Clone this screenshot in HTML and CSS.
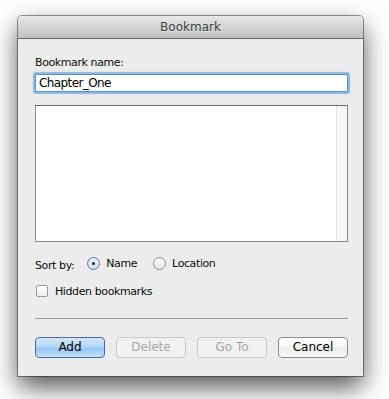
FILE: index.html
```html
<!DOCTYPE html>
<html lang="en">
<head>
    <meta charset="UTF-8">
    <title>Bookmark</title>
    <link rel="stylesheet" href="styles.css">
</head>
<body>
    <div class="window">
        <div class="titlebar">Bookmark</div>
        <div class="content">
            <div class="field-label">Bookmark name:</div>
            <div class="name-input">Chapter_One</div>
            <div class="bookmark-list">
                <div class="scroll-track"></div>
            </div>
            <div class="sort-row">
                <span class="sort-label">Sort by:</span>
                <span class="radio radio--checked"></span>
                <span class="option-text">Name</span>
                <span class="radio radio--gap"></span>
                <span class="option-text">Location</span>
            </div>
            <div class="check-row">
                <span class="checkbox"></span>
                <span class="option-text">Hidden bookmarks</span>
            </div>
            <div class="separator"></div>
            <div class="buttons">
                <div class="button button--default">Add</div>
                <div class="button button--disabled">Delete</div>
                <div class="button button--disabled">Go To</div>
                <div class="button">Cancel</div>
            </div>
        </div>
    </div>
</body>
</html>
```

FILE: styles.css
```css
html, body {
    height: 100%;
}
body {
    margin: 0;
    min-height: 399px;
    overflow: hidden;
    background-color: #ffffff;
    font-family: "DejaVu Sans", Verdana, sans-serif;
    color: #0d0d0d;
}
.window {
    width: 345px;
    margin: 16px 0 0 18px;
    background-color: #ececec;
    border-radius: 4px 4px 0 0;
    box-shadow: 0 0 0 1px rgba(0, 0, 0, 0.4), 0 11px 26px rgba(0, 0, 0, 0.68);
}
.titlebar {
    height: 22px;
    line-height: 23px;
    text-align: center;
    font-size: 12px;
    color: #3c3c3c;
    background: linear-gradient(#e9e9e9, #d0d0d0 60%, #c2c2c2);
    border-bottom: 1px solid #666;
    border-radius: 4px 4px 0 0;
    text-shadow: 0 1px 0 rgba(255, 255, 255, 0.5);
}
.content {
    padding: 17px 15px 18px 17px;
    display: flex;
    flex-direction: column;
}
.field-label {
    font-size: 11px;
    line-height: 13px;
    letter-spacing: -0.4px;
}
.name-input {
    margin-top: 5px;
    height: 16px;
    line-height: 16px;
    padding: 0 3px;
    background-color: #ffffff;
    border: 1px solid #5c8fc6;
    box-shadow: 0 0 1px 2px #8eb8e0;
    border-radius: 1px;
    font-size: 12px;
    letter-spacing: -0.6px;
    color: #000;
}
.bookmark-list {
    margin-top: 13px;
    height: 135px;
    background-color: #ffffff;
    border: 1px solid #8a8a8a;
    border-top-color: #6a6a6a;
    display: flex;
    justify-content: flex-end;
}
.scroll-track {
    width: 10px;
    background-color: #f6f6f6;
    border-left: 1px solid #e4e4e4;
}
.sort-row {
    margin-top: 13px;
    height: 16px;
    display: flex;
    align-items: center;
    font-size: 11px;
    letter-spacing: -0.4px;
}
.sort-label {
    margin-top: 4px;
    margin-right: 13px;
}
.option-text {
    margin-left: 6px;
}
.radio {
    width: 11px;
    height: 11px;
    border-radius: 50%;
    border: 1px solid #8d8d8d;
    background: linear-gradient(#ffffff, #e6e6e6);
    position: relative;
}
.radio--gap {
    margin-left: 16px;
}
.radio--checked {
    border-color: #5e77a3;
    background: linear-gradient(#eef4fb, #cfdff0);
}
.radio--checked::after {
    content: "";
    position: absolute;
    left: 4px;
    top: 4px;
    width: 3px;
    height: 3px;
    border-radius: 50%;
    background-color: #1d2a3c;
}
.check-row {
    margin-top: 12px;
    height: 16px;
    display: flex;
    align-items: center;
    font-size: 11px;
    letter-spacing: -0.4px;
    padding-left: 1px;
}
.checkbox {
    width: 10px;
    height: 10px;
    border: 1px solid #9a9a9a;
    border-radius: 2px;
    background: linear-gradient(#ffffff, #ececec);
}
.check-row .option-text {
    margin-left: 7px;
}
.separator {
    margin-top: 19px;
    height: 1px;
    background-color: #9c9c9c;
}
.buttons {
    margin-top: 18px;
    display: flex;
    justify-content: space-between;
}
.button {
    width: 68px;
    height: 19px;
    line-height: 19px;
    text-align: center;
    font-size: 12px;
    color: #000;
    border: 1px solid #8c8c8c;
    border-radius: 4px;
    background: linear-gradient(#ffffff, #f4f4f4 50%, #ececec 51%, #f7f7f7);
}
.button--default {
    border-color: #4e6899;
    background: linear-gradient(#d6e9fb, #aed3f6 50%, #92c2f0 51%, #c4e2fb);
}
.button--disabled {
    color: #a6a6a6;
    border-color: #c9c9c9;
    background: #f1f1f1;
}
```
